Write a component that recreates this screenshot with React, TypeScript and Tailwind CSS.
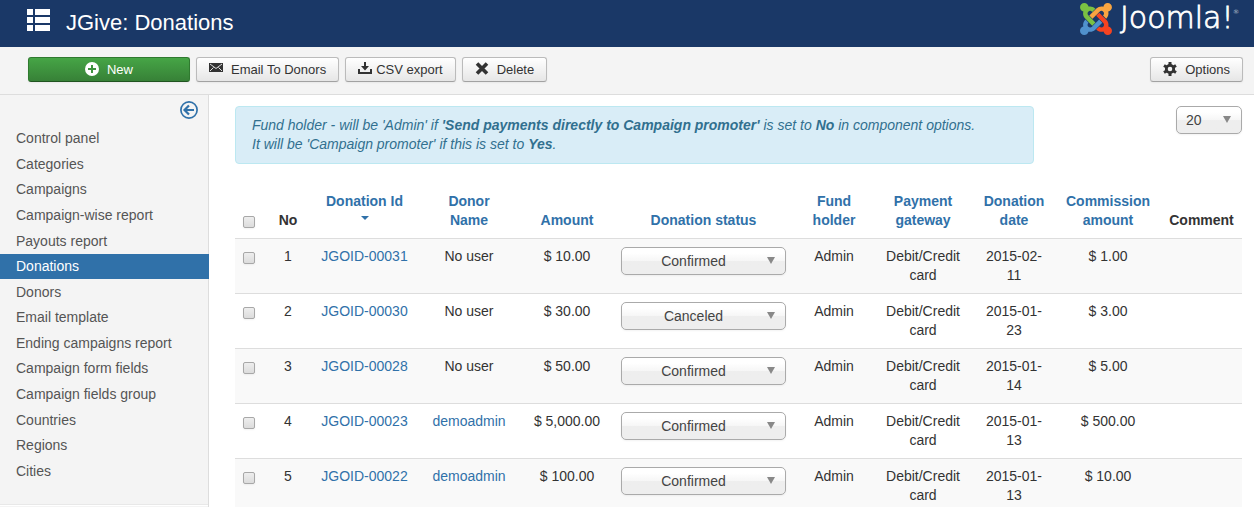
import type { ReactNode } from "react";

const menuItems = [
  "Control panel",
  "Categories",
  "Campaigns",
  "Campaign-wise report",
  "Payouts report",
  "Donations",
  "Donors",
  "Email template",
  "Ending campaigns report",
  "Campaign form fields",
  "Campaign fields group",
  "Countries",
  "Regions",
  "Cities",
];

const donations = [
  { no: 1, id: "JGOID-00031", donor: "No user", amount: "$ 10.00", status: "Confirmed", date: "2015-02-11", commission: "$ 1.00" },
  { no: 2, id: "JGOID-00030", donor: "No user", amount: "$ 30.00", status: "Canceled", date: "2015-01-23", commission: "$ 3.00" },
  { no: 3, id: "JGOID-00028", donor: "No user", amount: "$ 50.00", status: "Confirmed", date: "2015-01-14", commission: "$ 5.00" },
  { no: 4, id: "JGOID-00023", donor: "demoadmin", amount: "$ 5,000.00", status: "Confirmed", date: "2015-01-13", commission: "$ 500.00" },
  { no: 5, id: "JGOID-00022", donor: "demoadmin", amount: "$ 100.00", status: "Confirmed", date: "2015-01-13", commission: "$ 10.00" },
];

function JoomlaLogo() {
  return (
    <svg viewBox="0 0 160 36" className="h-9 w-40" aria-label="Joomla!">
      <g transform="translate(0 2) scale(0.0714) translate(0 -32)">
        <path
          fill="#7ac143"
          d="M.6 92.1C.6 58.8 27.4 32 60.4 32c30 0 54.5 21.9 59.2 50.2 32.6-7.6 67.1.6 96.5 30l-44.3 44.3c-20.500-20.500-42.600-16.300-55.400-3.500-14.300 14.300-14.300 37.900 0 52.200l99.500 99.500-44 44.300c-87.700-87.200-49.700-49.700-99.800-99.700-26.800-26.500-35-64.800-24.800-98.900C20.400 144.600.6 120.700.6 92.100z"
        />
        <path
          fill="#f9a541"
          d="M130.1 208.5l44.3 44.3c10-10 89.7-89.7 99.7-99.8 14.3-14.3 37.6-14.3 51.9 0 12.8 12.8 17 35-3.500 55.400l44 44.300c31.200-31.200 38.500-67.600 28.900-101.200 29.200-4.100 51.900-29.200 51.900-59.500 0-33.200-26.800-60.100-59.800-60.100-30.300 0-55.400 22.500-59.500 51.600-33.800-9.900-71.700-1.500-98.300 25.100-18.300 19.100-71.100 71.500-99.600 99.900z"
        />
        <path
          fill="#f44321"
          d="M396.4 360.7c8.2-32.700-.9-68.500-26.300-93.900-11.800-12.200 5 4.700-99.500-99.700l-44.300 44.300 99.700 99.700c14.300 14.300 14.300 37.600 0 51.900-12.800 12.800-35 17-55.400-3.500l-44 44.300c27.600 30.200 68 38.800 102.700 28 5.500 27.400 29.700 48.100 58.900 48.100 33 0 59.800-26.800 59.800-60.100 0-30.200-22.500-55-51.600-59.100z"
        />
        <path
          fill="#5091cd"
          d="M312.1 307.6l-44-44.3c-87 86.400-50.400 50.400-99.700 99.800-14.300 14.300-37.600 14.300-51.900 0-13.100-13.400-16.900-35.300 3.200-55.400l-44-44.300c-30.200 30.200-38 65.200-29.500 98.300-26.700 6-46.200 29.900-46.200 58.200C0 453.200 26.800 480 59.800 480c28.600 0 52.500-19.800 58.600-46.700 32.700 8.200 68.500-.6 94.200-26 32.100-32.200 12.200-12.200 99.500-99.700z"
        />
      </g>
      <g className="font-['DejaVu_Sans',sans-serif] font-extralight" fill="#fff">
        <text x="40" y="27" fontSize="30" stroke="#fff" strokeWidth="0.8">
          Joomla!
        </text>
        <text x="153" y="13" fontSize="6">
          ®
        </text>
      </g>
    </svg>
  );
}

function ToolbarButton({ icon, children }: { icon: ReactNode; children: ReactNode }) {
  return (
    <button
      type="button"
      className="flex h-[25px] items-center rounded-[3px] border border-[#bbb] border-b-[#a2a2a2] bg-linear-to-b from-white to-[#e6e6e6] px-3 text-[13px] text-[#333] shadow-xs"
    >
      {icon}
      {children}
    </button>
  );
}

function Select({ label, options, className }: { label: string; options: string[]; className: string }) {
  return (
    <div className="relative">
      <select
        aria-label={label}
        className={`block h-7 appearance-none rounded-[5px] border border-[#aaa] bg-linear-to-b from-white from-20% via-[#f6f6f6] via-50% to-[#eee] to-52% text-sm leading-5 text-[#444] shadow-xs ${className}`}
      >
        {options.map((o) => (
          <option key={o}>{o}</option>
        ))}
      </select>
      <svg viewBox="0 0 8 7" className="pointer-events-none absolute top-[10px] right-[11px] h-[7px] w-2" aria-hidden="true">
        <path d="M0 0h8L4 7z" fill="#888" />
      </svg>
    </div>
  );
}

function Checkbox({ label }: { label: string }) {
  return (
    <input
      type="checkbox"
      aria-label={label}
      className="block size-3 appearance-none rounded-[2px] border border-[#a8a8a8] bg-linear-to-b from-[#eee] to-[#dcdcdc] shadow-xs"
    />
  );
}

function SortLink({ children }: { children: ReactNode }) {
  return (
    <a href="#sort" className="text-[#3071a9]">
      {children}
    </a>
  );
}

export default function App() {
  return (
    <div className="flex h-screen flex-col overflow-hidden bg-white font-['Liberation_Sans',Arial,sans-serif] text-sm leading-[19px] text-[#333]">
      <header className="flex h-[47px] shrink-0 items-center justify-between bg-[#1a3867] pr-3.5 pl-[27px]">
        <div className="flex items-center gap-4 pb-0.5">
          <svg viewBox="0 0 23 22" className="mb-1.5 h-[22px] w-[23px]" fill="#fff" aria-hidden="true">
            <path d="M0 0h6v6H0zM8 0h15v6H8zM0 8h6v6H0zM8 8h15v6H8zM0 16h6v6H0zM8 16h15v6H8z" />
          </svg>
          <h1 className="text-[22px] leading-6 text-white">JGive: Donations</h1>
        </div>
        <div className="mb-2.5">
          <JoomlaLogo />
        </div>
      </header>

      <div className="flex h-12 shrink-0 items-center gap-1.5 border-b border-[#ddd] bg-[#f4f4f4] pr-[11px] pb-0.5 pl-7">
        <button
          type="button"
          className="flex h-[25px] w-[162px] items-center justify-center gap-2 rounded-[3px] border border-[#2f7a2f] border-b-[#205420] bg-linear-to-b from-[#46a546] to-[#378137] text-[13px] text-white shadow-xs"
        >
          <svg viewBox="0 0 14 14" className="mb-0.5 size-3.5" aria-hidden="true">
            <circle cx="7" cy="7" r="7" fill="#fff" />
            <path d="M7 3v8M3 7h8" stroke="#3f933f" strokeWidth="2" />
          </svg>
          New
        </button>
        <ToolbarButton
          icon={
            <svg viewBox="0 0 14 9" className="mr-2 mb-1 h-[9px] w-3.5" aria-hidden="true">
              <path d="M0 0h14v9H0z" fill="#333" />
              <path d="M1 1l6 4.500L13 1M1 8l3.500-3.500M13 8L9.500 4.500" fill="none" stroke="#f4f4f4" strokeWidth="0.9" />
            </svg>
          }
        >
          Email To Donors
        </ToolbarButton>
        <ToolbarButton
          icon={
            <svg viewBox="0 0 14 12" className="mr-1 mb-1 h-3 w-3.5" fill="#333" aria-hidden="true">
              <path d="M6 0h2v4h3L7 8.500 3 4h3zM0 7h2v3h10V7h2v5H0z" />
            </svg>
          }
        >
          CSV export
        </ToolbarButton>
        <ToolbarButton
          icon={
            <svg viewBox="0 0 14 13" className="mr-2 mb-0.5 h-[13px] w-3.5" aria-hidden="true">
              <path d="M2 1.500l10 10M12 1.500l-10 10" stroke="#333" strokeWidth="3.600" />
            </svg>
          }
        >
          Delete
        </ToolbarButton>
        <div className="ml-auto">
          <ToolbarButton
            icon={
              <svg viewBox="0 0 14 14" className="mr-2 mb-0.5 size-3.5" aria-hidden="true">
                <circle cx="7" cy="7" r="3.700" fill="none" stroke="#333" strokeWidth="2.800" />
                <path d="M7 0v3M7 11v3M1 3.500l2.500 1.500M10.500 9l2.500 1.500M1 10.500L3.500 9M10.500 5L13 3.500" stroke="#333" strokeWidth="3" />
              </svg>
            }
          >
            Options
          </ToolbarButton>
        </div>
      </div>

      <div className="flex min-h-0 flex-1">
        <aside className="w-[209px] shrink-0 bg-[#f4f4f4] shadow-[inset_-1px_0_0_#ddd]">
          <div className="flex h-[31px] justify-end pt-1.5 pr-[11px]">
            <button type="button" aria-label="Hide sidebar" className="size-[18px]">
              <svg viewBox="0 0 18 18" className="size-[18px]" fill="none" stroke="#3071a9" aria-hidden="true">
                <circle cx="9" cy="9" r="8.100" strokeWidth="1.700" />
                <path d="M14 9H5M9 4.500L4.500 9 9 13.500" strokeWidth="2.200" />
              </svg>
            </button>
          </div>
          <nav>
            <ul className="grid h-[358px] auto-rows-fr">
              {menuItems.map((item) => (
                <li key={item} className="grid">
                  <a
                    href="#menu"
                    className={
                      item === "Donations"
                        ? "flex items-center bg-[#3071a9] pl-4 text-white"
                        : "flex items-center pl-4 text-[#555]"
                    }
                  >
                    {item}
                  </a>
                </li>
              ))}
            </ul>
          </nav>
          <hr className="mt-5 mr-px border-t border-b border-t-[#e8e8e8] border-b-white" />
        </aside>

        <main className="min-w-0 flex-1 pt-[11px] pr-3 pl-[26px]">
          <div className="flex items-start justify-between">
            <p className="max-w-[799px] flex-1 rounded border border-[#bce8f1] bg-[#d9edf7] px-4 py-[9px] text-[#31708f] italic">
              Fund holder - will be 'Admin' if <b>'Send payments directly to Campaign promoter'</b> is set to <b>No</b> in
              component options.
              <br />
              It will be 'Campaign promoter' if this is set to <b>Yes</b>.
            </p>
            <Select label="Rows per page" options={["20", "50", "100"]} className="w-[66px] pl-[9px]" />
          </div>

          <table className="mt-5 w-full table-fixed text-center">
            <colgroup>
              <col className="w-[28px]" />
              <col className="w-[50px]" />
              <col className="w-[103px]" />
              <col className="w-[106px]" />
              <col className="w-[90px]" />
              <col className="w-[183px]" />
              <col className="w-[78px]" />
              <col className="w-[100px]" />
              <col className="w-[82px]" />
              <col className="w-[106px]" />
              <col className="w-[81px]" />
            </colgroup>
            <thead>
              <tr className="align-bottom [&>th]:py-2">
                <th className="pl-2">
                  <div className="pb-0.5">
                    <Checkbox label="Select all donations" />
                  </div>
                </th>
                <th>No</th>
                <th>
                  <SortLink>
                    Donation Id
                    <svg viewBox="0 0 8 4" className="mx-auto mt-[5px] mb-2.5 h-1 w-2" aria-hidden="true">
                      <path d="M0 0h8L4 4z" fill="#3071a9" />
                    </svg>
                  </SortLink>
                </th>
                <th className="px-6">
                  <SortLink>Donor Name</SortLink>
                </th>
                <th>
                  <SortLink>Amount</SortLink>
                </th>
                <th>
                  <SortLink>Donation status</SortLink>
                </th>
                <th className="px-2">
                  <SortLink>Fund holder</SortLink>
                </th>
                <th className="px-2">
                  <SortLink>Payment gateway</SortLink>
                </th>
                <th className="px-2">
                  <SortLink>Donation date</SortLink>
                </th>
                <th className="px-2">
                  <SortLink>Commission amount</SortLink>
                </th>
                <th>Comment</th>
              </tr>
            </thead>
            <tbody>
              {donations.map((d) => (
                <tr key={d.id} className="border-t border-[#ddd] align-top odd:bg-[#f9f9f9] [&>td]:py-2">
                  <td className="pl-2">
                    <div className="pt-[5px]">
                      <Checkbox label={`Select ${d.id}`} />
                    </div>
                  </td>
                  <td>{d.no}</td>
                  <td>
                    <a href="#donation" className="text-[#3071a9]">
                      {d.id}
                    </a>
                  </td>
                  <td>
                    {d.donor === "No user" ? (
                      d.donor
                    ) : (
                      <a href="#donor" className="text-[#3071a9]">
                        {d.donor}
                      </a>
                    )}
                  </td>
                  <td>{d.amount}</td>
                  <td className="px-[9px]">
                    <Select
                      label={`Status of ${d.id}`}
                      options={d.status === "Confirmed" ? ["Confirmed", "Canceled"] : ["Canceled", "Confirmed"]}
                      className="w-full pr-5 text-center [text-align-last:center]"
                    />
                  </td>
                  <td>Admin</td>
                  <td className="px-2">Debit/Credit card</td>
                  <td className="px-2.5">{d.date}</td>
                  <td>{d.commission}</td>
                  <td />
                </tr>
              ))}
            </tbody>
          </table>
        </main>
      </div>
    </div>
  );
}
